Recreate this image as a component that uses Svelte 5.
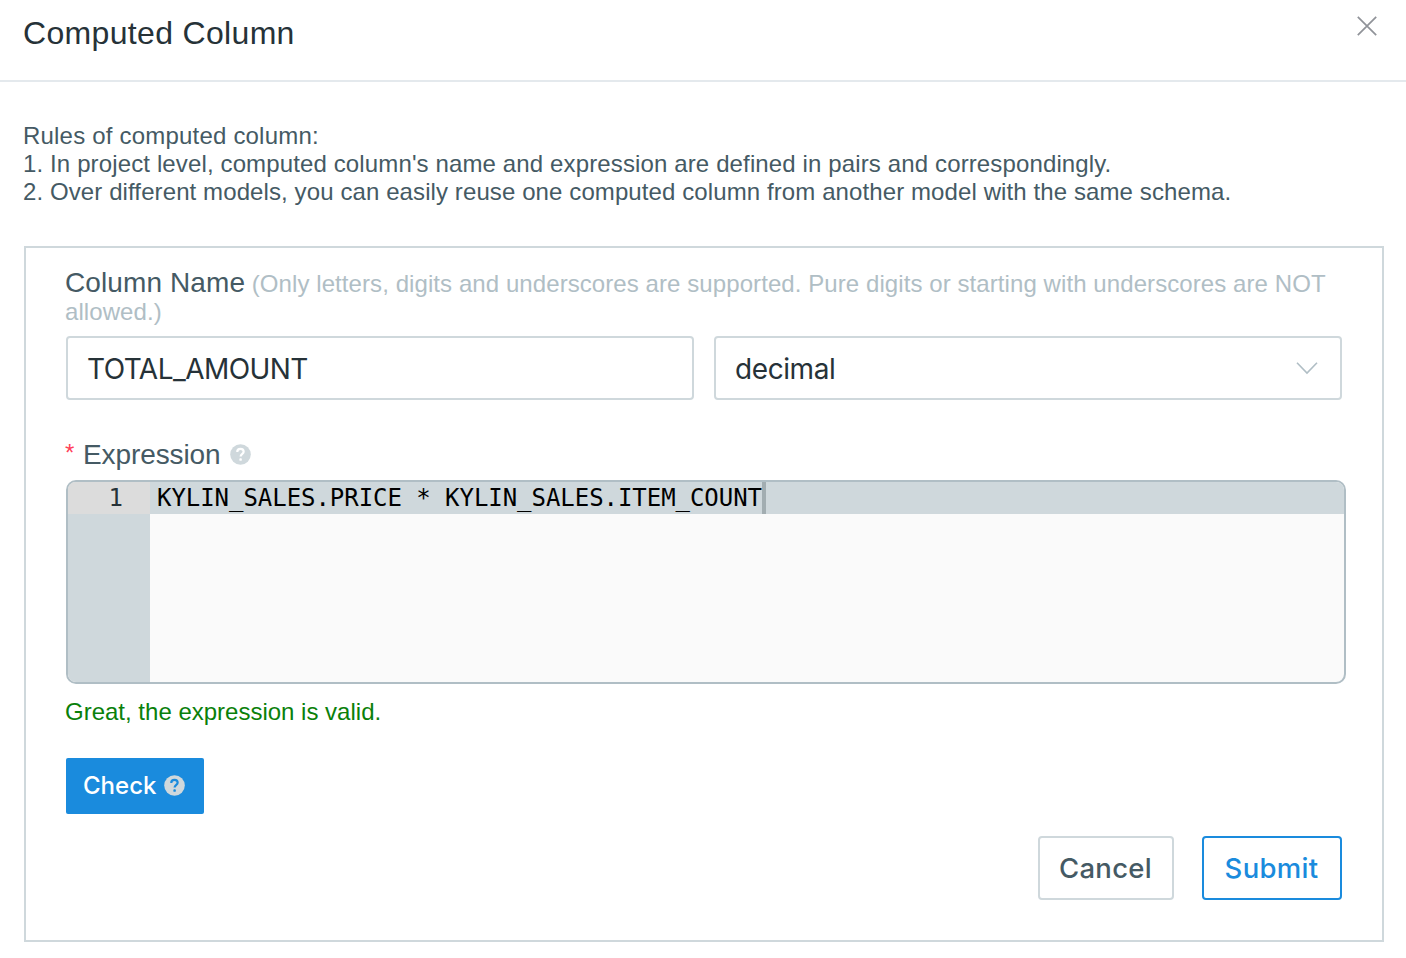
<script>
  let columnName = 'TOTAL_AMOUNT';
  let dataType = 'decimal';
  let expression = 'KYLIN_SALES.PRICE * KYLIN_SALES.ITEM_COUNT';
</script>

{#snippet help(variant)}
  <svg class="help {variant}" viewBox="0 0 22 22" aria-hidden="true">
    <circle cx="11" cy="11" r="10.8" />
    <path d="M7.6 8.3C7.6 6.3 9.1 5.1 11 5.1C12.9 5.1 14.3 6.3 14.3 8C14.3 10.2 11.2 10.4 11.1 13.1" />
    <rect x="9.8" y="15" width="2.6" height="2.6" rx="0.9" />
  </svg>
{/snippet}

<div class="dialog">
  <header>
    <h1><span class="title">Computed Column</span></h1>
    <button class="close" aria-label="Close">
      <svg width="20" height="20" viewBox="0 0 20 20"><path d="M0.8 0.8L19.2 19.2M19.2 0.8L0.8 19.2" /></svg>
    </button>
  </header>

  <section class="rules">
    <div><span class="r0">Rules of computed column:</span></div>
    <div><span class="r1">1. In project level, computed column's name and expression are defined in pairs and correspondingly.</span></div>
    <div><span class="r2">2. Over different models, you can easily reuse one computed column from another model with the same schema.</span></div>
  </section>

  <section class="panel">
    <div class="name-label">
      <span class="label">Column Name</span>
      <span class="hint">(Only letters, digits and underscores are supported. Pure digits or starting with underscores are NOT<br />allowed.)</span>
    </div>
    <div class="fields">
      <div class="field"><span class="name-value">{columnName}</span></div>
      <div class="field select">
        <span class="type-value">{dataType}</span>
        <svg width="22" height="14" viewBox="0 0 22 14"><path d="M1 0.8L11 11.1L21 0.8" /></svg>
      </div>
    </div>

    <div class="expr-label">
      <span class="star">*</span>
      <span class="expr">Expression</span>
      {@render help('light')}
    </div>
    <div class="editor">
      <div class="gutter"><div class="line-no">1</div></div>
      <div class="code">
        <div class="line"><span class="src">{expression}</span><i class="cursor"></i></div>
      </div>
    </div>
    <div class="valid"><span>Great, the expression is valid.</span></div>
    <button class="check"><span>Check</span>{@render help('onblue')}</button>
    <footer>
      <button class="cancel"><span>Cancel</span></button>
      <button class="submit"><span>Submit</span></button>
    </footer>
  </section>
</div>

<style>
  :global(body) { margin: 0; background: #fff; }
  * { box-sizing: border-box; }
  .dialog {
    width: 1406px;
    height: 958px;
    background: #fff;
    font-family: 'Liberation Sans', Arial, sans-serif;
    color: #455a64;
    overflow: hidden;
    white-space: nowrap;
  }
  button { font: inherit; padding: 0; margin: 0; background: none; border: 0; }
  header {
    height: 82px;
    border-bottom: 2px solid #e4e9ed;
    display: flex;
    justify-content: space-between;
    padding: 15px 29px 0 23px;
  }
  h1 { margin: 0; font-size: 32px; line-height: 36px; font-weight: 400; color: #263238; }
  .title { letter-spacing: 0.33px; }
  .close { height: 20px; width: 20px; margin-top: 1px; }
  .close svg { display: block; }
  .close path { stroke: #909399; stroke-width: 1.7; fill: none; }
  .rules { padding: 40px 0 0 23px; font-size: 24px; line-height: 28px; height: 164px; }
  .r0 { letter-spacing: 0.2px; }
  .r1 { letter-spacing: 0.13px; }
  .r2 { letter-spacing: 0.1px; }
  .panel {
    margin-left: 24px;
    width: 1360px;
    height: 696px;
    border: 2px solid #cfd8dc;
    padding: 21px 36px 0 40px;
  }
  .name-label { height: 67px; font-size: 24px; line-height: 28px; margin-left: -1px; }
  .label { font-size: 28px; letter-spacing: 0.1px; }
  .hint { color: #b0bec5; letter-spacing: 0.08px; }
  .fields { display: flex; gap: 20px; }
  .field {
    width: 628px;
    height: 64px;
    border: 2px solid #cfd8dc;
    border-radius: 4px;
    display: flex;
    align-items: center;
    justify-content: space-between;
    padding: 1px 22px 0 19px;
    color: #263238;
    font-family: Inter, sans-serif;
    font-size: 28px;
  }
  .name-value { letter-spacing: -0.55px; }
  .type-value { letter-spacing: -0.42px; }
  .select path { stroke: #b0bec5; stroke-width: 1.6; fill: none; }
  .expr-label { display: flex; height: 80px; padding-top: 38px; font-size: 28px; line-height: 34px; margin-left: -1px; }
  .star { color: #ff4159; width: 18px; font-size: 24px; line-height: 29px; }
  .expr { width: 147px; letter-spacing: -0.1px; }
  .help { width: 21px; height: 21px; flex: none; }
  .light { margin-top: 6px; }
  .help circle { fill: #cfd8dc; }
  .help path { fill: none; stroke: #fff; stroke-width: 2.3; }
  .help rect { fill: #fff; }
  .help.onblue path { stroke: #1a8bdd; }
  .help.onblue rect { fill: #1a8bdd; }
  .editor {
    width: 1280px;
    height: 204px;
    border: 2px solid #b0bec5;
    border-radius: 10px;
    overflow: hidden;
    display: flex;
    background: #fafafa;
    font-family: 'DejaVu Sans Mono', monospace;
    font-size: 24px;
    line-height: 32px;
  }
  .gutter { width: 82px; background: #cfd8dc; }
  .line-no { height: 32px; background: #dcdcdc; padding-right: 27px; text-align: right; color: #263238; }
  .code { flex: 1; color: #000; }
  .line { height: 32px; background: #cfd8dc; padding-left: 7px; display: flex; }
  .src { letter-spacing: -0.045px; }
  .cursor { width: 4px; height: 32px; background: #a2adb1; }
  .valid { margin-left: -1px; height: 74px; padding-top: 14px; font-size: 24px; line-height: 28px; color: #0a800a; }
  .check {
    width: 138px;
    height: 56px;
    border-radius: 2px;
    background: #1a8bdd;
    color: #fff;
    font-family: Inter, sans-serif;
    font-weight: 500;
    font-size: 24px;
    display: flex;
    align-items: center;
    justify-content: space-between;
    padding: 0 19px 1px 17px;
  }
  footer { display: flex; gap: 28px; justify-content: flex-end; padding-right: 4px; margin: 22px 2px 0 0; width: 1280px; }
  footer button {
    height: 64px;
    border: 2px solid #cfd8dc;
    border-radius: 4px;
    font-family: Inter, sans-serif;
    font-weight: 500;
    font-size: 27.5px;
    letter-spacing: 0.3px;
    padding: 0 1px 1px 0;
    text-align: center;
  }
  .cancel { width: 136px; color: #455a64; }
  .submit { width: 140px; color: #1a8bdd; border-color: #1a8bdd; }
</style>
